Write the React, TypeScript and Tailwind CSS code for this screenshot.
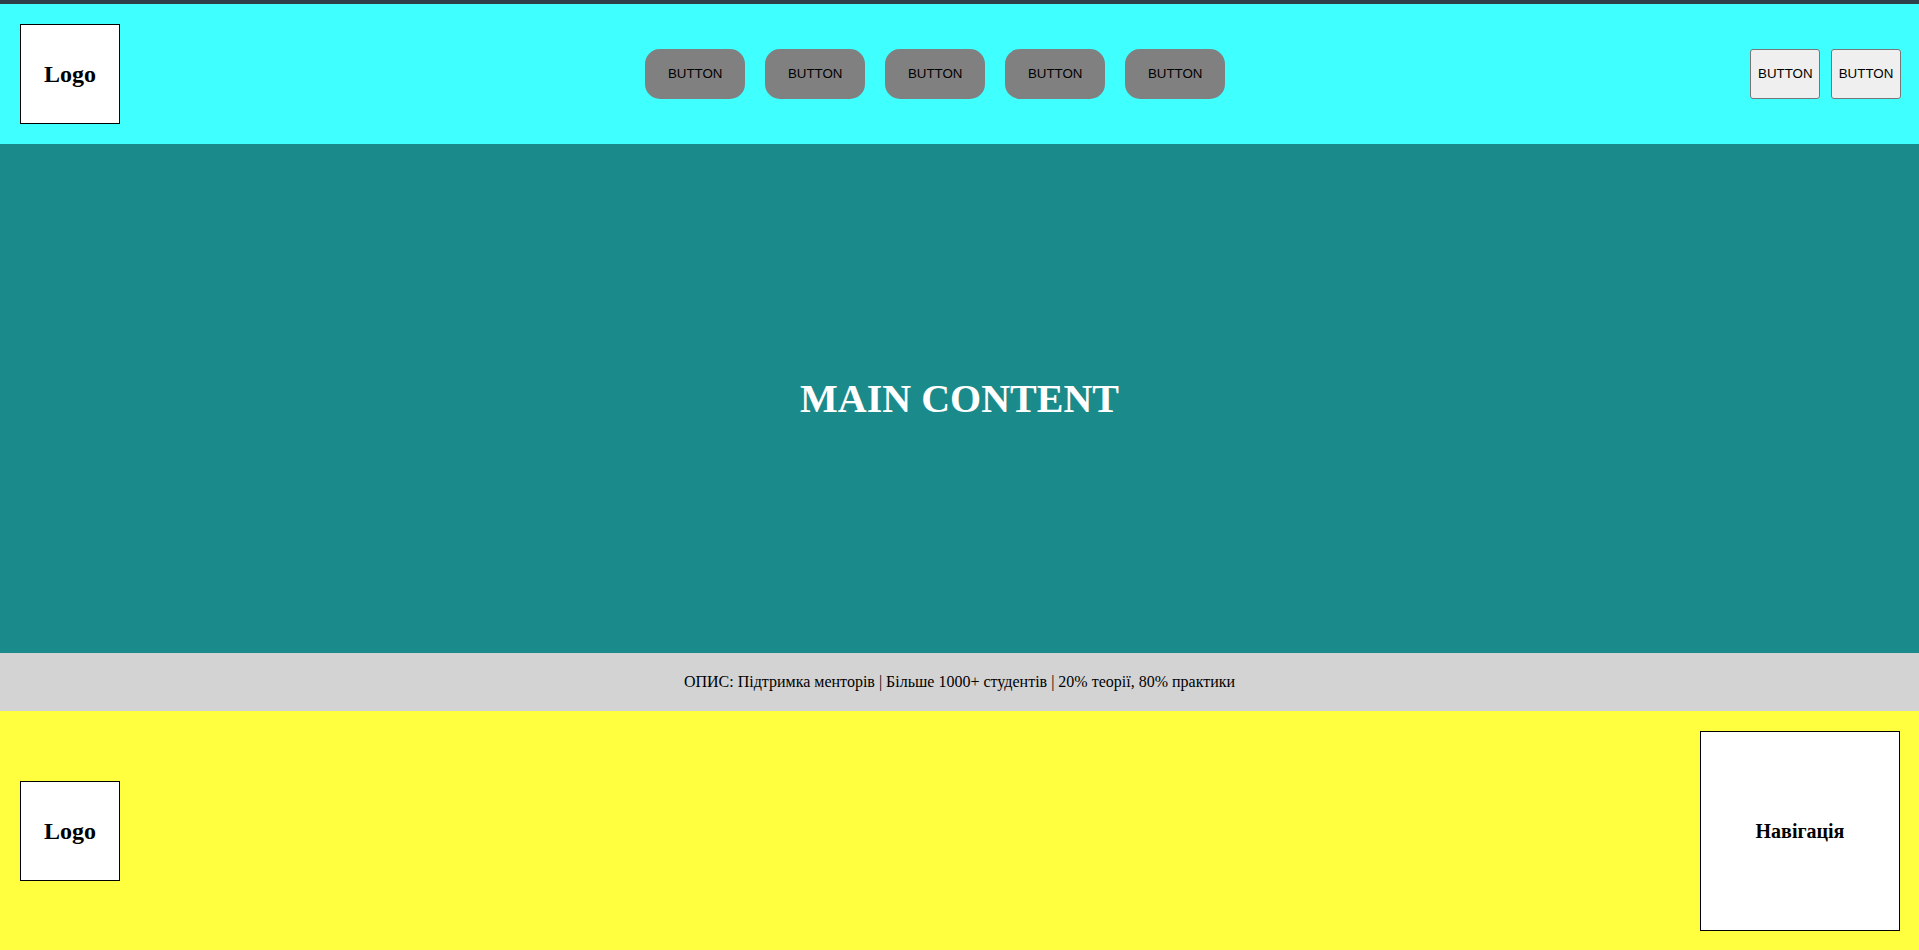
export default function App() {
  const navs = ["BUTTON", "BUTTON", "BUTTON", "BUTTON", "BUTTON"];
  return (
    <div className="w-full" style={{ fontFamily: '"Liberation Serif", "Times New Roman", serif' }}>
      <div className="h-[4px] bg-[#2f3f4a]" />
      <header className="h-[140px] bg-[#40ffff] flex items-center justify-between pl-[20px] pr-[18px]">
        <div className="w-[100px] h-[100px] bg-white border border-black flex items-center justify-center">
          <h2 className="text-[24px] font-bold text-black leading-none">Logo</h2>
        </div>
        <nav className="flex gap-[20px]">
          {navs.map((n, i) => (
            <button
              key={i}
              className="w-[100px] h-[50px] rounded-[15px] bg-[#808080] text-black text-[13.33px]"
              style={{ fontFamily: '"Liberation Sans", Arial, sans-serif' }}
            >
              {n}
            </button>
          ))}
        </nav>
        <div className="flex gap-[10.7px]">
          {["BUTTON", "BUTTON"].map((n, i) => (
            <button
              key={i}
              className="w-[70px] h-[50px] rounded-[3px] bg-[#efefef] border border-[#767676] text-black text-[13.33px]"
              style={{ fontFamily: '"Liberation Sans", Arial, sans-serif' }}
            >
              {n}
            </button>
          ))}
        </div>
      </header>
      <main className="h-[509px] bg-[#1b8a8a] flex items-center justify-center">
        <h1 className="text-[40px] font-bold text-white leading-none">MAIN CONTENT</h1>
      </main>
      <div className="h-[58px] bg-[#d3d3d3] flex items-center justify-center">
        <p className="text-[16px] text-black">
          ОПИС: Підтримка менторів | Більше 1000+ студентів | 20% теорії, 80% практики
        </p>
      </div>
      <footer className="h-[240px] bg-[#ffff40] flex items-center justify-between pl-[20px] pr-[19px]">
        <div className="w-[100px] h-[100px] bg-white border border-black flex items-center justify-center">
          <h2 className="text-[24px] font-bold text-black leading-none">Logo</h2>
        </div>
        <div className="w-[200px] h-[200px] bg-white border border-black flex items-center justify-center">
          <h3 className="text-[20px] font-bold text-black leading-none">Навігація</h3>
        </div>
      </footer>
    </div>
  );
}
